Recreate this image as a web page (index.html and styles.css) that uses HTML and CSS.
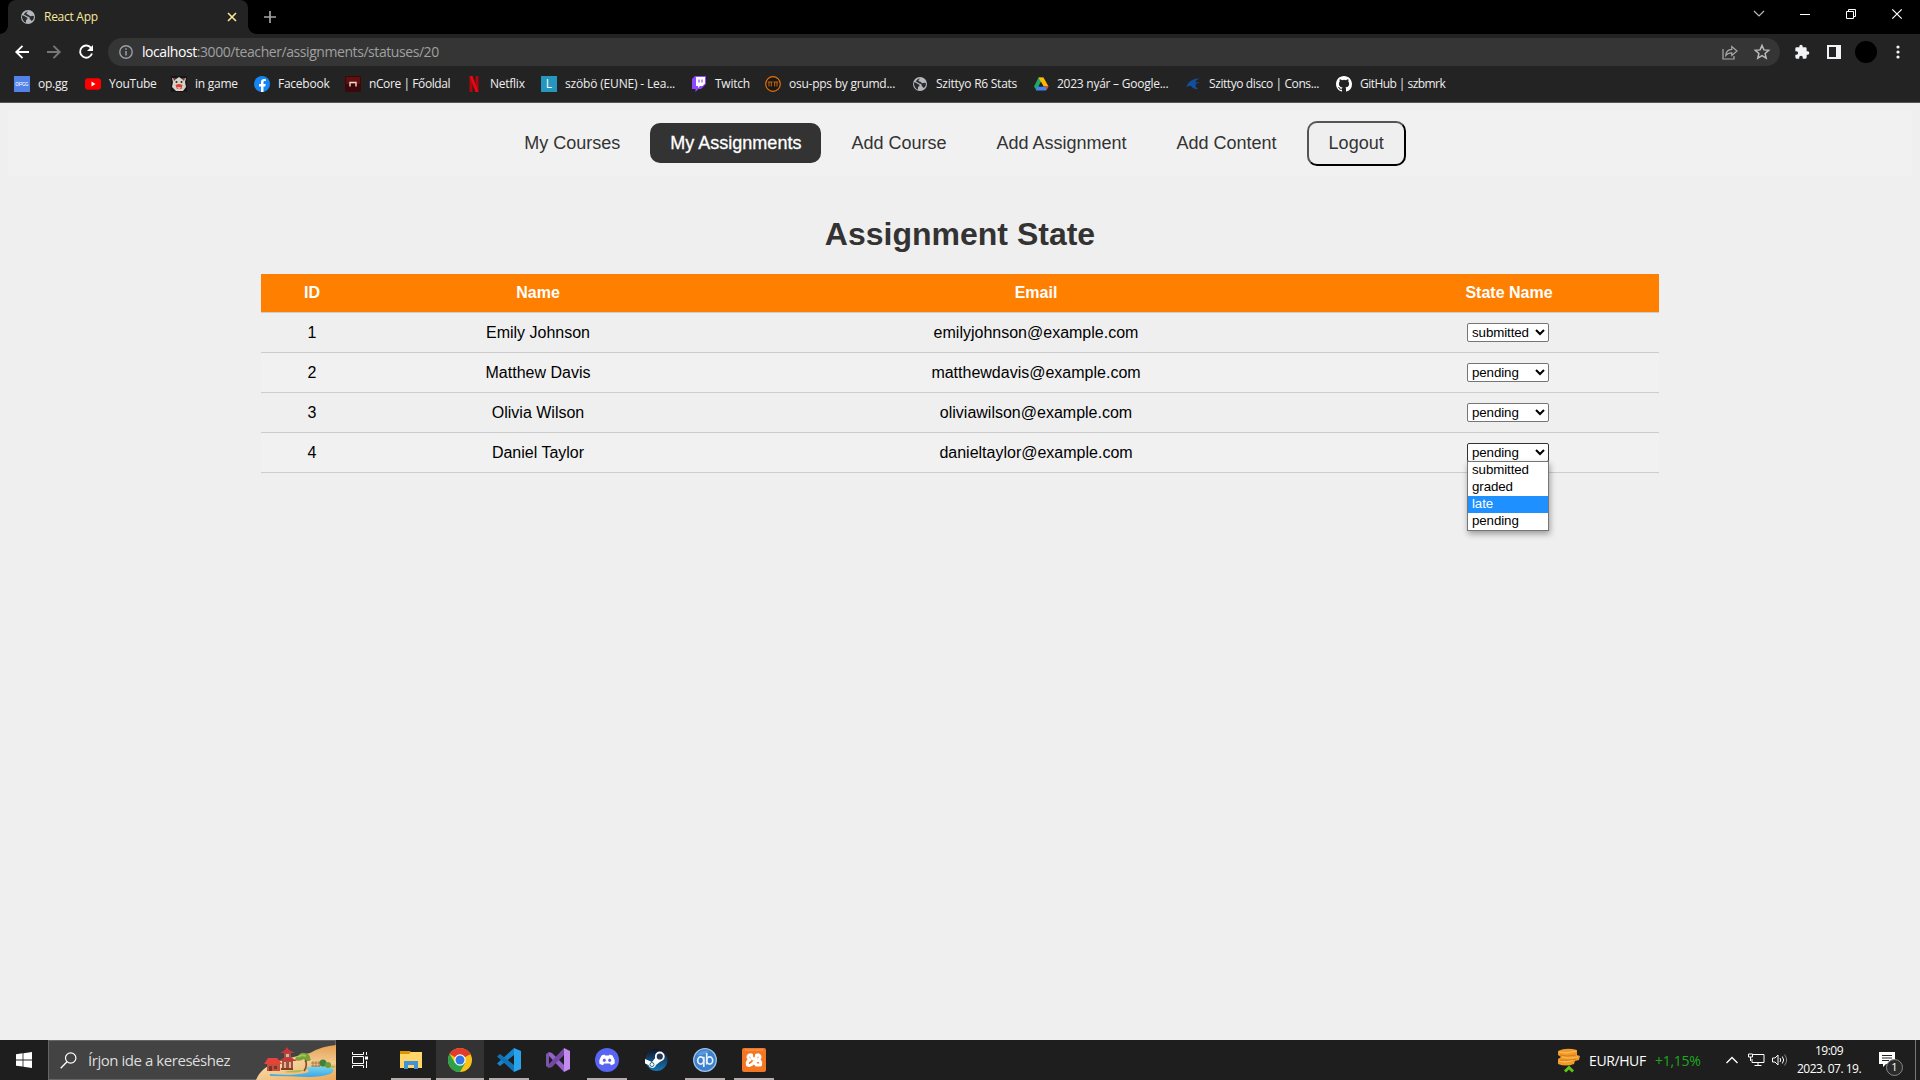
FILE: index.html
```html
<!DOCTYPE html>
<html lang="hu">
<head>
<meta charset="utf-8">
<title>React App</title>
<link rel="stylesheet" href="styles.css">
</head>
<body>
<svg class="defs" width="0" height="0">
  <symbol id="globe" viewBox="0 0 16 16"><circle cx="8" cy="8" r="7" fill="#b4b8bd"/><path d="M2 6.500c1.500 0 2.500.3 3.500 1.300s2 .2 2 1.700-1.500.7-1.500 2v2.200C3.500 12.800 1.700 10 2 6.500zM8 2.500c-.5 1.200-1.800 1-1.500 2.300.3 1 2 .4 2.600 1.400.6.900 1.400 1.300 2.400.8s1.500 0 2.500.3c0 2-.8 4-2.500 5 0-1.200-.8-1.200-1.500-2-.7-.8 0-1.600-.9-2.300-.9-.6-2.300-.2-2.800-1.200-.4-.8-1.600-.5-2.300-1.400C4.500 3.700 6 2.700 8 2.500z" fill="#2a2b2d"/></symbol>
</svg>
<header class="browser">
  <div class="tabstrip">
    <div class="tab">
      <svg class="i16" viewBox="0 0 16 16"><use href="#globe"/></svg>
      <span class="tab-title">React App</span>
      <svg class="tab-close" viewBox="0 0 10 10"><path d="M1 1l8 8M9 1l-8 8" stroke="#f8e99a" stroke-width="1.600"/></svg>
    </div>
    <svg class="newtab" viewBox="0 0 12 12"><path d="M6 0v12M0 6h12" stroke="#a2a5a9" stroke-width="1.700"/></svg>
    <div class="winbtns">
      <svg width="12" height="12" viewBox="0 0 12 12"><path d="M1 3l5 5 5-5" stroke="#bbb" fill="none" stroke-width="1.200"/></svg>
      <svg width="10" height="12" viewBox="0 0 10 12"><path d="M0 6.500h10" stroke="#fff"/></svg>
      <svg width="11" height="11" viewBox="0 0 11 11"><path d="M.5 2.500h7v7h-7zM2.500 2.500v-2h7v7h-2" stroke="#fff" fill="none"/></svg>
      <svg width="10" height="10" viewBox="0 0 10 10"><path d="M.3.3l9.400 9.400M9.700.3L.3 9.700" stroke="#fff" stroke-width="1.200"/></svg>
    </div>
  </div>
  <div class="toolbar">
    <svg class="back" viewBox="0 0 14 14"><path d="M14 7H1.500M7.500.8L1.300 7l6.200 6.200" stroke="#fff" stroke-width="1.900" fill="none"/></svg>
    <svg class="fwd" viewBox="0 0 14 14"><path d="M0 7h12.500M6.500.8L12.700 7l-6.200 6.200" stroke="#777" stroke-width="1.900" fill="none"/></svg>
    <svg class="reload" viewBox="0 0 14 14"><path d="M12.300 3.200A6.100 6.100 0 1 0 13 8.500" stroke="#fff" stroke-width="1.900" fill="none"/><path d="M14 0v6H8z" fill="#fff"/></svg>
    <div class="omnibox">
      <svg class="info" viewBox="0 0 14 14"><circle cx="7" cy="7" r="6.200" stroke="#9aa0a6" stroke-width="1.400" fill="none"/><path d="M7 6v4.500M7 3.300v1.500" stroke="#9aa0a6" stroke-width="1.500"/></svg>
      <span class="url"><b>localhost</b>:3000/teacher/assignments/statuses/20</span>
      <svg class="share" viewBox="0 0 16 15"><path d="M1 4v10h11v-3" stroke="#aaa" stroke-width="1.200" fill="none"/><path d="M3.800 10.500c.3-4 2.500-6 6-6.200V1.500L15 6l-5.200 4.500V7.800c-2.800 0-4.500.7-6 2.700z" stroke="#aaa" stroke-width="1.200" fill="none"/></svg>
      <svg class="star" viewBox="0 0 16 16"><path d="M8 1.500l1.900 4.400 4.800.4-3.600 3.200 1.100 4.700L8 11.700l-4.200 2.500 1.100-4.700L1.300 6.300l4.800-.4z" stroke="#bbb" stroke-width="1.500" fill="none"/></svg>
    </div>
    <svg class="ext" viewBox="0 0 24 24"><path fill="#f1f3f4" d="M20.500 11H19V7a2 2 0 0 0-2-2h-4V3.500a2.500 2.500 0 0 0-5 0V5H4a2 2 0 0 0-2 2v3.800h1.500a2.700 2.700 0 0 1 0 5.400H2V20a2 2 0 0 0 2 2h3.800v-1.500a2.700 2.700 0 0 1 5.400 0V22H17a2 2 0 0 0 2-2v-4h1.500a2.500 2.500 0 0 0 0-5z"/></svg>
    <svg class="panel" viewBox="0 0 14 14"><path fill="#f1f3f4" fill-rule="evenodd" d="M0 0h14v14H0zM2 2v10h7V2z"/></svg>
    <span class="avatar"></span>
    <svg class="dots" viewBox="0 0 4 14"><g fill="#f1f3f4"><circle cx="2" cy="2" r="1.600"/><circle cx="2" cy="7" r="1.600"/><circle cx="2" cy="12" r="1.600"/></g></svg>
  </div>
  <nav class="bookmarks">
    <a><svg class="i16" viewBox="0 0 16 16"><path fill="#5383e8" d="M0 0h16v16H0z"/><path d="M2 6.500h2.300v3H2zM5.500 10V6.500H8v2H6M11 6.500H8.800v3H11V8M14 6.500h-2.200v3H14V8" stroke="#c8d7fa" fill="none" stroke-width=".9"/></svg><span>op.gg</span></a>
    <a><svg class="i16" viewBox="0 0 16 16"><rect y="2.300" width="16" height="11.400" rx="3" fill="#f00"/><path d="M6.500 5.500v5l4-2.500z" fill="#fff"/></svg><span>YouTube</span></a>
    <a><svg class="i16" viewBox="0 0 16 16"><path fill="#15151d" d="M0 0h16v16H0z"/><path d="M1 2l4 1 3-2 3 2 4-1-1 4 1 5-3 4H5l-4-4 1-5z" fill="#d8d2c4"/><path d="M2 2l3 1-2 2zM14 2l-3 1 2 2z" fill="#862e2c"/><circle cx="5.500" cy="6" r="1" fill="#222"/><circle cx="10.500" cy="6" r="1" fill="#222"/><path d="M4.500 9q3.500-2 7 0l-1 4H6z" fill="#d8403e"/><path d="M6 11h4l-1 2H7z" fill="#f5a5a0"/></svg><span>in game</span></a>
    <a><svg class="i16" viewBox="0 0 16 16"><circle cx="8" cy="8" r="8" fill="#1385f4"/><path d="M7 16v-5.600H5V8h2V6.300C7 4.100 8.200 3 10.100 3l1.700.1v2h-1c-1 0-1.300.5-1.300 1.200V8h2.200l-.4 2.400H9.500V16z" fill="#fff"/></svg><span>Facebook</span></a>
    <a class="tight"><svg class="i16" viewBox="0 0 16 16"><rect width="16" height="16" rx="2" fill="#3c0708"/><rect x="1" y="1" width="14" height="7" rx="1" fill="#61100f"/><path d="M5 10.500V6.500h6v4" stroke="#ecd9d2" stroke-width="1.400" fill="none"/></svg><span>nCore | Főoldal</span></a>
    <a><svg class="i16" viewBox="0 0 16 16"><path fill="#b1060f" d="M3.500 0h3v16h-3zM9.500 0h3v16h-3z"/><path fill="#e50914" d="M3.500 0h3l6 16h-3z"/></svg><span>Netflix</span></a>
    <a class="loose"><span class="letter">L</span><span>szöbö (EUNE) - Lea...</span></a>
    <a><svg class="i16" viewBox="0 0 16 16"><path fill="#9146ff" d="M4 0L1 3v10h3.500v3l3-3H10l5-5V0z"/><path fill="#fff" d="M5 1h9v6.500L11.500 10H9l-2 2v-2H5z"/><path d="M8 3.500v3M11 3.500v3" stroke="#9146ff" stroke-width="1.200"/></svg><span>Twitch</span></a>
    <a><svg class="i16" viewBox="0 0 16 16"><circle cx="8" cy="8" r="7.300" fill="#1b1714" stroke="#e8710a" stroke-width="1.200"/><path d="M2.800 6h4.700M4 6v4.500M6.300 6v4.500M8.500 6h4.700M9.700 6v4.500M12 6v4.500" stroke="#c96610" fill="none"/></svg><span>osu-pps by grumd...</span></a>
    <a><svg class="i16" viewBox="0 0 16 16"><use href="#globe"/></svg><span>Szittyo R6 Stats</span></a>
    <a><svg class="i16" viewBox="0 0 16 16"><path d="M5.500 1.500h5L3.500 14.500 1 10.500z" fill="#22a565"/><path d="M5.500 1.500h5l5 9h-5z" fill="#ffba00"/><path d="M4.500 10.500H15.500L13 14.500H3z" fill="#4285f4"/><path d="M11.500 10.500h4L13.500 14z" fill="#ea4335"/><path d="M8 6l2.500 4.500h-5z" fill="#232323"/></svg><span>2023 nyár – Google...</span></a>
    <a class="tight"><svg class="i16" viewBox="0 0 16 16"><path d="M0 11.500C2 10.500 2.500 9 3 7.500 6 4 10 2.300 15 2.500 12 3.500 10.500 5 10 6.500L15 6c-2.500 1-4.500 2-4.500 3.500 0 1.200 1 2.300 2.500 3.500-3.500.3-5.500-1-6.500-2.800-1.500-.7-4.500 0-6.500 1.300z" fill="#12509e"/></svg><span>Szittyo disco | Cons...</span></a>
    <a class="tighter"><svg class="i16" viewBox="0 0 16 16"><path fill="#fff" d="M8 0C3.580 0 0 3.580 0 8c0 3.540 2.290 6.530 5.470 7.590.4.070.55-.17.55-.38 0-.19-.01-.82-.01-1.490-2.010.37-2.530-.49-2.690-.94-.09-.23-.48-.94-.82-1.130-.28-.15-.68-.52-.01-.53.63-.01 1.080.58 1.230.82.72 1.210 1.870.87 2.330.66.07-.52.28-.87.51-1.070-1.780-.2-3.640-.89-3.640-3.950 0-.87.31-1.590.82-2.150-.08-.2-.36-1.020.08-2.120 0 0 .67-.21 2.200.82a7.600 7.600 0 0 1 4 0c1.530-1.040 2.200-.82 2.200-.82.44 1.100.16 1.920.08 2.120.51.56.82 1.270.82 2.150 0 3.070-1.870 3.750-3.650 3.950.29.25.54.73.54 1.480 0 1.070-.01 1.930-.01 2.200 0 .21.15.46.55.38A8 8 0 0 0 16 8c0-4.420-3.580-8-8-8z"/></svg><span>GitHub | szbmrk</span></a>
  </nav>
</header>

<main class="page">
  <nav class="navbar">
    <a>My Courses</a>
    <a class="active">My Assignments</a>
    <a>Add Course</a>
    <a>Add Assignment</a>
    <a>Add Content</a>
    <button class="logout">Logout</button>
  </nav>
  <h1>Assignment State</h1>
  <table class="states">
    <colgroup><col class="c-id"><col class="c-name"><col class="c-email"><col class="c-state"></colgroup>
    <thead><tr><th>ID</th><th>Name</th><th>Email</th><th>State Name</th></tr></thead>
    <tbody>
      <tr><td>1</td><td>Emily Johnson</td><td>emilyjohnson@example.com</td><td><div class="pick"><select><option>submitted</option></select></div></td></tr>
      <tr><td>2</td><td>Matthew Davis</td><td>matthewdavis@example.com</td><td><div class="pick"><select><option>pending</option></select></div></td></tr>
      <tr><td>3</td><td>Olivia Wilson</td><td>oliviawilson@example.com</td><td><div class="pick"><select><option>pending</option></select></div></td></tr>
      <tr><td>4</td><td>Daniel Taylor</td><td>danieltaylor@example.com</td><td><div class="pick open"><select><option>pending</option></select>
        <ul class="popup"><li>submitted</li><li>graded</li><li class="hover">late</li><li>pending</li></ul></div></td></tr>
    </tbody>
  </table>
</main>

<footer class="taskbar">
  <div class="start"><svg width="16" height="16" viewBox="0 0 16 16"><path fill="#fff" d="M0 2.200l6.600-.9v6.200H0zM7.400 1.200L16 0v7.500H7.400zM0 8.400h6.600v6.200L0 13.700zM7.400 8.400H16V16l-8.600-1.200z"/></svg></div>
  <div class="search">
    <svg class="glass" viewBox="0 0 17 17"><circle cx="10.700" cy="6" r="5.200" stroke="#fff" stroke-width="1.200" fill="none"/><path d="M7 9.800L.7 16.200" stroke="#fff" stroke-width="1.300"/></svg>
    <span>Írjon ide a kereséshez</span>
    <svg class="scene" viewBox="0 0 80 40">
      <defs>
        <linearGradient id="dune" x1="0" x2="0" y1="0" y2="1"><stop offset="0" stop-color="#e5a055"/><stop offset=".7" stop-color="#f8dba6"/></linearGradient>
        <linearGradient id="sand" x1="0" x2="1" y1="0" y2="1"><stop offset="0" stop-color="#fbe7bd"/><stop offset="1" stop-color="#eda95a"/></linearGradient>
        <linearGradient id="lake" x1="0" x2="0" y1="0" y2="1"><stop offset="0" stop-color="#7ad7ee"/><stop offset="1" stop-color="#3aa6e6"/></linearGradient>
      </defs>
      <path d="M34 18q10-3 20-5Q66 6 80 5v35H24z" fill="url(#dune)"/>
      <path d="M0 40C4 31 9 27 20 22c10-4 24-6 36-2 9 3 16 5 24 4v16z" fill="url(#sand)"/>
      <path d="M28 32q6-2 20-2l-4 2q-8 1-16 0zM58 27q8-3 22-1l-2 2q-10-2-20-1z" fill="#a9bb4e"/>
      <path d="M14 34q22 2 36-1 5-2 1-4-3-2 2-2 10-2 23 1 4 3-2 6-8 3-22 3-20-1-38-1z" fill="url(#lake)"/>
      <path d="M11 23h13v8H11z" fill="#c0503d"/><path d="M8 24l4-6h9l5 6z" fill="#e5423a"/><path d="M13 26h3v5h-3zM18 26h3v3h-3z" fill="#803123"/>
      <path d="M25 28h12v2H25z" fill="#8a3b25"/><path d="M26 21h11v7H26zM28 13h7v6h-7z" fill="#985443"/><path d="M23 21l4-3h9l5 3zM24 13l5-3 2-3 2 3 6 3z" fill="#d1323a"/><path d="M28 22h2v6h-2zM33 22h2v6h-2zM30 14h3v3h-3z" fill="#e6b18f"/>
      <path d="M48 31q4-5 1-13M49 22l4-4" stroke="#80502b" stroke-width="1.700" fill="none"/>
      <path d="M39 20q0-3 4-4 1-4 6-3 5 1 5 5 2 2-1 3-3 0-5-2-4 3-9 1z" fill="#74a238"/><path d="M42 17q3-3 8-1" stroke="#a7c458" stroke-width="2" fill="none"/>
      <path d="M55 23h10M55 26h9M57 21v6M60 21v6M63 21v6" stroke="#9c6c42" stroke-width=".8"/>
      <circle cx="67" cy="23" r="3.500" fill="#467e3b"/><circle cx="72" cy="25" r="3" fill="#6c9c3d"/>
    </svg>
  </div>
  <div class="app"><svg width="16" height="16" viewBox="0 0 16 16"><path d="M.5 0v2.500h11V0M.5 16v-2.500h11V16M.5 4.500h11v7H.5zM14.500 0v3M14.500 9v7" stroke="#fff" fill="none"/><path d="M13 4.500h3v3h-3z" fill="#fff"/></svg></div>
  <div class="apps">
    <div class="app run"><svg width="24" height="24" viewBox="0 0 24 24"><path d="M1 3h9l2 1h11v16H1z" fill="#ffd667"/><path d="M1 3h9l1.500 1.500L10 6H1z" fill="#d89700"/><path d="M5 21v-8h14v8h-4v-4H9v4z" fill="#3d94d9"/></svg></div>
    <div class="app run current"><svg width="24" height="24" viewBox="0 0 24 24"><circle cx="12" cy="12" r="12" fill="#fbc116"/><path d="M12 12L1.600 6A12 12 0 0 1 22.400 6z" fill="#e33b2e"/><path d="M1.600 6A12 12 0 0 0 12 24l5.200-9L12 12 7 15z" fill="#2aa24c"/><path d="M12 6h10.400" stroke="#e33b2e"/><circle cx="12" cy="12" r="5.700" fill="#fff"/><circle cx="12" cy="12" r="4.500" fill="#3077e8"/></svg></div>
    <div class="app run"><svg width="24" height="24" viewBox="0 0 24 24"><path d="M17 0v7L3 18 0 15.500z" fill="#1684cd"/><path d="M17 24v-7L3 6 0 8.500z" fill="#1173b5"/><path d="M17 0l7 3v18l-7 3z" fill="#29a4ec"/></svg></div>
    <div class="app"><svg width="24" height="24" viewBox="0 0 24 24"><path d="M0 6l3-2v16l-3-2z" fill="#7b55a9"/><path d="M3 4l3 1 12 12v7L3 8z" fill="#9363ca"/><path d="M18 0v7L6 19l-3 1v-4z" fill="#7548a3"/><path d="M18 0l6 3v18l-6 3z" fill="#c38af0"/></svg></div>
    <div class="app run"><svg width="24" height="24" viewBox="0 0 24 24"><circle cx="12" cy="12" r="12" fill="#5865f2"/><path fill="#fff" d="M9.500 6.500l.5 1h4l.5-1 3 1q2.700 4 2.200 8-1.500 1.300-3.700 1.700l-1-1.600H9L8 17.200q-2.200-.4-3.700-1.700-.5-4 2.200-8z"/><ellipse cx="9.300" cy="12.300" rx="1.500" ry="1.700" fill="#5865f2"/><ellipse cx="14.700" cy="12.300" rx="1.500" ry="1.700" fill="#5865f2"/></svg></div>
    <div class="app"><svg width="24" height="24" viewBox="0 0 24 24"><defs><linearGradient id="st" x1="0" y1="0" x2="0" y2="1"><stop offset="0" stop-color="#10132c"/><stop offset="1" stop-color="#1679b5"/></linearGradient></defs><circle cx="12.500" cy="12" r="11" fill="url(#st)"/><path d="M1 11l7 3 4-5 5 4-5 4q-1 3-4 3-3-.5-3.500-3L1 15.500z" fill="#fff"/><circle cx="15.800" cy="8.500" r="4" fill="#243851" stroke="#fff" stroke-width="1.800"/><circle cx="8" cy="16.500" r="2" fill="none" stroke="#23698f" stroke-width="1"/></svg></div>
    <div class="app run"><svg width="24" height="24" viewBox="0 0 24 24"><circle cx="12" cy="12" r="11.300" fill="#3e80cb" stroke="#9bc5ee" stroke-width="1.300"/><path d="M4 7q4-5 12-4-4 5-12 4z" fill="#5c9ade"/><g fill="none" stroke="#e4f0fc" stroke-width="1.700"><ellipse cx="7.700" cy="12.500" rx="3" ry="3.600"/><path d="M10.800 8.800V19M13.700 5v11.500"/><ellipse cx="16.700" cy="12.500" rx="3" ry="3.600"/></g></svg></div>
    <div class="app run"><svg width="24" height="24" viewBox="0 0 24 24"><rect width="24" height="24" rx="2" fill="#f37623"/><path d="M3 2h18" stroke="#f8a46c"/><g fill="none" stroke="#fff" stroke-width="3" stroke-linecap="round" stroke-linejoin="round"><path d="M9.500 7H7q-2.500 2.500 1 5-3.500 1-2.500 5 2 1.300 4-.5l5-3.500"/><path d="M9.500 7q0 4 2.500 4t2.500-4H17q2.500 2.500-1 5 3.500 1 2.500 5h-4l-2.500-3"/></g></svg></div>
  </div>
  <div class="tray">
    <svg class="coin" viewBox="0 0 24 25"><path d="M1 3q8-4 19-1v5l3 1-1 4-4 1-1 3q-8 3-16 0v-5l3-2-3-2z" fill="#f09a2c"/><path d="M2 4q8 2 17-1M5 9q8 2 16 0M2 13q8 2 14-1" stroke="#ffbd55" fill="none" stroke-width="1.200"/><path d="M3 7q7 2 16 0M3 12q8 1 16-1" stroke="#cf7512" fill="none" stroke-width=".8"/><path d="M8 23.500l4-4 4 4" stroke="#5fc414" stroke-width="3" fill="none"/></svg>
    <span class="pair">EUR/HUF</span><span class="gain">+1,15%</span>
    <svg class="chev" viewBox="0 0 12 8"><path d="M.5 7L6 1.500 11.500 7" stroke="#fff" stroke-width="1.400" fill="none"/></svg>
    <svg class="net" viewBox="0 0 17 14"><path d="M5 1.500h11v8H4V6M10 9.500v3M6.500 12.500h7M.5 1h4v3h-4zM2.500 4v4" stroke="#fff" fill="none"/></svg>
    <svg class="vol" viewBox="0 0 17 14"><path d="M.5 5h2.500l3-3v10l-3-3H.5z" stroke="#fff" fill="none"/><path d="M8 5q1.500 2 0 4M10.300 3.500q2.800 3.500 0 7" stroke="#fff" fill="none"/><path d="M12.600 1.500q4 5.500 0 11" stroke="#888" fill="none"/></svg>
    <div class="clock"><span>19:09</span><span>2023. 07. 19.</span></div>
    <div class="note"><svg width="16" height="16" viewBox="0 0 16 16"><path d="M0 0h16v12H7l-3 3v-3H0z" fill="#fff"/><path d="M3 3.500h10M3 6h10M3 8.500h7" stroke="#222"/></svg><span class="count">1</span></div>
    <span class="peek"></span>
  </div>
</footer>
</body>
</html>
```
FILE: styles.css
```css
* { box-sizing: border-box; }
body { margin: 0; width: 1920px; height: 1080px; overflow: hidden; display: flex; flex-direction: column; background: #efefef; font-family: "Liberation Sans", Arial, sans-serif; }
svg { display: block; flex: none; overflow: visible; }
.defs { position: absolute; }
.i16 { width: 16px; height: 16px; }

.browser { height: 103px; flex: none; background: #232323; border-bottom: 1px solid #555; font-family: "Open Sans", "Noto Sans", sans-serif; color: #eee; }
.tabstrip { height: 34px; background: #000; display: flex; align-items: center; padding-left: 8px; }
.tab { position: relative; width: 240px; height: 34px; background: #232323; border-radius: 8px 8px 0 0; display: flex; align-items: center; padding: 0 11px 0 12px; }
.tab::before, .tab::after { content: ""; position: absolute; bottom: 0; width: 8px; height: 8px; }
.tab::before { left: -8px; background: radial-gradient(circle at 0 0, #000 7.5px, #232323 8px); }
.tab::after { right: -8px; background: radial-gradient(circle at 100% 0, #000 7.5px, #232323 8px); }
.tab-title { margin-left: 8px; padding-bottom: 1px; font-size: 12px; letter-spacing: -.27px; color: #f8e99a; }
.tab-close { width: 10px; height: 10px; margin-left: auto; }
.newtab { width: 12px; height: 12px; margin-left: 16px; }
.winbtns { margin-left: auto; display: grid; grid-template-columns: repeat(4, 46px); align-items: center; height: 28px; padding-bottom: 6px; }
.winbtns svg { margin: 0 auto; }
.toolbar { height: 34px; display: flex; align-items: center; padding: 4px 0 2px 15px; }
.back, .fwd, .reload { width: 14px; height: 14px; }
.fwd { margin-left: 18px; }
.reload { margin-left: 18px; }
.omnibox { width: 1672px; height: 28px; margin-left: 15px; border-radius: 14px; background: #353535; display: flex; align-items: center; padding: 0 10px 0 11px; }
.info { width: 14px; height: 14px; }
.url { margin-left: 9px; padding-bottom: 1px; font-size: 14px; letter-spacing: -.43px; color: #a0a0a0; }
.url b { font-weight: 400; color: #fff; }
.share { width: 16px; height: 15px; margin-left: auto; }
.star { width: 16px; height: 16px; margin-left: 16px; }
.ext { width: 16px; height: 16px; margin-left: 14px; }
.panel { width: 14px; height: 14px; margin-left: 17px; }
.avatar { width: 22px; height: 22px; border-radius: 50%; background: #000; margin-left: 14px; }
.dots { width: 4px; height: 14px; margin-left: 19px; }
.bookmarks { height: 34px; padding: 0 0 2px 14px; display: grid; align-items: center; grid-template-columns: 71px 86px 83px 91px 121px 75px 150px 74px 147px 121px 152px 151px 200px; font-size: 12px; letter-spacing: -.25px; }
.bookmarks a { display: flex; align-items: center; gap: 8px; white-space: nowrap; }
.bookmarks span:last-child { padding-bottom: 1px; }
.bookmarks .tight { letter-spacing: -.41px; }
.bookmarks .tighter { letter-spacing: -.55px; }
.bookmarks .loose { letter-spacing: -.17px; }
.letter { width: 16px; height: 16px; background: #2596be; color: #fff; font: 12px/16px "Open Sans", sans-serif; text-align: center; letter-spacing: 0; }

.page { flex: 1; padding: 8px; }
.navbar { height: 65px; background: #f1f1f1; display: flex; justify-content: center; align-items: flex-start; padding-top: 10px; font-size: 18px; color: #333; }
.navbar a { height: 40px; line-height: 40px; padding: 0 20px; margin: 2px 10px 0 0; border-radius: 10px; }
.navbar .active { background: #333; color: #fff; -webkit-text-stroke: .3px #fff; }
.logout { margin: 0 10px 0 0; height: 45px; padding: 0 20px; font: 18px "Liberation Sans", Arial, sans-serif; color: #333; background: #efefef; border: 2px outset #000; border-color: #555 #000 #000 #555; border-radius: 10px; }
h1 { margin: 39px 0 21px; font-size: 32px; line-height: 38px; text-align: center; color: #333; }
.states { width: 1398px; margin: 0 auto; table-layout: fixed; border-collapse: separate; border-spacing: 0; font-size: 16px; text-align: center; color: #000; }
.c-id { width: 102px; }
.c-name { width: 350px; }
.c-email { width: 646px; }
.c-state { width: 300px; }
.states th { height: 39px; padding: 0 0 1px; background: #ff8000; color: #fff; border-bottom: 1px solid #ccc; }
.states td { height: 40px; padding: 0; border-bottom: 1px solid #ccc; }
.states tbody tr:nth-child(even) { background: #f1f1f1; }
.pick { position: relative; width: 82px; height: 19px; margin: 0 0 0 108px; }
.pick select { display: block; width: 82px; height: 19px; margin: 0; font: 13.333px "Liberation Sans", Arial, sans-serif; letter-spacing: -.1px; color: #000; background: #fff; border: 1px solid #767676; border-radius: 2px; }
.pick.open select { border-color: #333; }
.popup { position: absolute; left: 0; top: 18px; width: 82px; margin: 0; padding: 0; list-style: none; background: #fff; border: 1px solid #767676; box-shadow: 1px 3px 6px rgba(0,0,0,.35); font-size: 13.333px; letter-spacing: -.1px; line-height: 16px; text-align: left; }
.popup li { padding-left: 4px; height: 17px; }
.popup .hover { background: #1e90ff; color: #fff; }

.taskbar { height: 40px; flex: none; display: flex; background: #1e1e1e; color: #fff; font-family: "Open Sans", "Noto Sans", sans-serif; }
.start { width: 48px; display: grid; place-items: center; }
.search { width: 288px; background: #434343; border: 1px solid #666; display: flex; align-items: center; padding-left: 11px; font-size: 15px; letter-spacing: -.45px; color: #ddd; }
.search span { margin-left: 11px; white-space: nowrap; }
.glass { width: 17px; height: 17px; }
.scene { width: 80px; height: 40px; margin: -1px -1px -1px auto; }
.app { width: 48px; height: 40px; display: grid; place-items: center; position: relative; }
.apps { display: flex; gap: 1px; margin-left: 3px; }
.run::after { content: ""; position: absolute; left: 4px; right: 4px; bottom: 0; height: 2px; background: #b5adad; }
.current { background: #333; }
.current::after { left: 0; right: 0; }
.tray { margin-left: auto; width: 363px; display: flex; align-items: center; font-size: 14px; }
.coin { width: 24px; height: 25px; }
.pair { width: 58px; margin-left: 8px; letter-spacing: -.4px; }
.gain { width: 47px; margin-left: 8px; color: #1ca91c; letter-spacing: -.3px; }
.chev { width: 12px; height: 8px; margin-left: 24px; }
.net { width: 17px; height: 14px; margin-left: 10px; }
.vol { width: 17px; height: 14px; margin-left: 7px; }
.clock { width: 66px; margin-left: 7px; font-size: 12px; line-height: 18px; letter-spacing: -.5px; display: flex; flex-direction: column; text-align: center; white-space: nowrap; }
.note { width: 16px; margin-left: 17px; position: relative; }
.count { position: absolute; left: 7px; top: 7px; width: 17px; height: 17px; border: 1px solid #888; border-radius: 50%; background: #2b2b2b; font-size: 11px; line-height: 14px; text-align: center; }
.peek { width: 1px; height: 40px; background: #777; margin-left: auto; margin-right: 4px; }
```
